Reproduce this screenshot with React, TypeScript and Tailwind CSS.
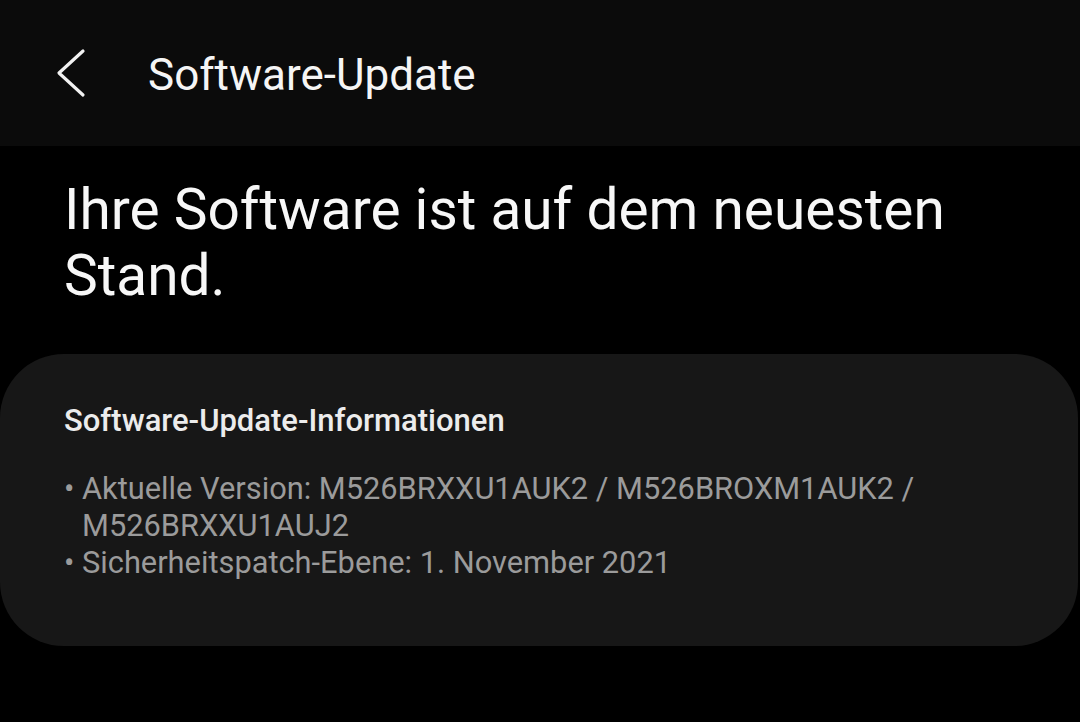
import { ChevronLeft } from "lucide-react";

const App = () => {
  return (
    <div className="flex h-[722px] w-[1080px] flex-col overflow-hidden bg-black font-['Roboto',sans-serif] text-white">
      <header className="flex h-[146px] items-center bg-[#0b0b0b] pl-[50px] pt-[4px]">
        <svg width="40" height="52" viewBox="0 0 40 52" className="-mt-[4px] shrink-0">
          <path d="M33 4 L9 26 L33 48" fill="none" stroke="#f2f2f2" strokeWidth="3.2" strokeLinecap="round" strokeLinejoin="round" />
        </svg>
        <h1 className="ml-[58px] text-[44px] leading-none text-[#f5f5f5]">Software-Update</h1>
      </header>

      <main className="flex flex-col">
        <h2 className="px-[64px] pt-[31px] text-[56.8px] leading-[66px] text-[#f7f7f7]">
          Ihre Software ist auf dem neuesten Stand.
        </h2>

        <section className="mt-[45px] mr-[2px] rounded-[64px] bg-[#171717] px-[64px] pt-[51px] pb-[65px]">
          <h3 className="text-[31px] font-medium leading-none text-[#ececec]">
            Software-Update-Informationen
          </h3>
          <ul className="mt-[34px] text-[30.8px] leading-[37px] text-[#9b9b9b]">
            <li className="flex">
              <span className="w-[18px] shrink-0">•</span>
              <span>Aktuelle Version: M526BRXXU1AUK2 / M526BROXM1AUK2 / M526BRXXU1AUJ2</span>
            </li>
            <li className="flex">
              <span className="w-[18px] shrink-0">•</span>
              <span>Sicherheitspatch-Ebene: 1. November 2021</span>
            </li>
          </ul>
        </section>
      </main>
    </div>
  );
};

export default App;
